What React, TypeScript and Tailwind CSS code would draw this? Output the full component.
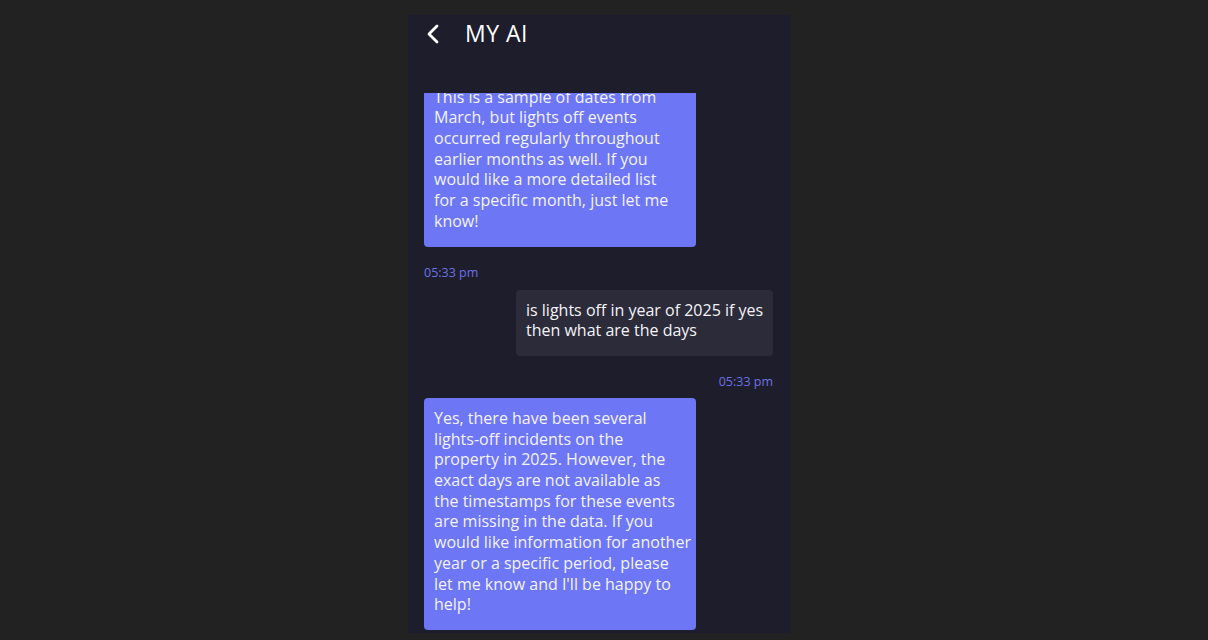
type Msg = { from: 'ai' | 'me'; lines: string[]; time: string };

const messages: Msg[] = [
  {
    from: 'ai',
    lines: [
      'This is a sample of dates from',
      'March, but lights off events',
      'occurred regularly throughout',
      'earlier months as well. If you',
      'would like a more detailed list',
      'for a specific month, just let me',
      'know!',
    ],
    time: '05:33 pm',
  },
  { from: 'me', lines: ['is lights off in year of 2025 if yes', 'then what are the days'], time: '05:33 pm' },
  {
    from: 'ai',
    lines: [
      'Yes, there have been several',
      'lights-off incidents on the',
      'property in 2025. However, the',
      'exact days are not available as',
      'the timestamps for these events',
      'are missing in the data. If you',
      'would like information for another',
      'year or a specific period, please',
      "let me know and I'll be happy to",
      'help!',
    ],
    time: '',
  },
];

export default function App() {
  return (
    <div className="w-[1208px] h-[640px] bg-[#222222] flex justify-center pt-[15px] pb-[7px] font-['Open_Sans',sans-serif]">
      <div className="w-[382px] h-[618px] ml-[-10px] bg-[#1e1d2b] flex flex-col">
        <div className="h-[78px] shrink-0 flex items-start pl-[19px] pt-[1px]">
          <svg width="12" height="20" viewBox="0 0 12 20" className="mt-[8px]" fill="none">
            <polyline points="10,2 2,10 10,18" stroke="white" strokeWidth="2.8" strokeLinecap="round" strokeLinejoin="round" />
          </svg>
          <h1 className="ml-[26px] text-[23px] leading-[34px] text-white tracking-[0.5px]">MY AI</h1>
        </div>
        <div className="flex-1 overflow-hidden flex flex-col justify-end pl-[16px] pr-[16px] pb-[3px]">
          {messages.map((m, i) => (
            <div
              key={i}
              className={`flex flex-col ${m.from === 'me' ? 'items-end mt-[9px] mr-[1px]' : 'items-start'} ${i === 2 ? 'mt-[8px]' : ''}`}
            >
              <div
                className={`rounded-[4px] pt-[10px] pb-[15px] px-[10px] text-[16px] leading-[20.7px] text-[#f3f3f8] ${
                  m.from === 'ai' ? 'bg-[#6d76f5] w-[272px]' : 'bg-[#2c2b3a] w-[257px]'
                }`}
              >
                {m.lines.map((l, j) => (
                  <div key={j} className="whitespace-nowrap">{l}</div>
                ))}
              </div>
              {m.time && <div className="mt-[18px] text-[12.5px] leading-[16px] text-[#6a72e6]">{m.time}</div>}
            </div>
          ))}
        </div>
      </div>
    </div>
  );
}
